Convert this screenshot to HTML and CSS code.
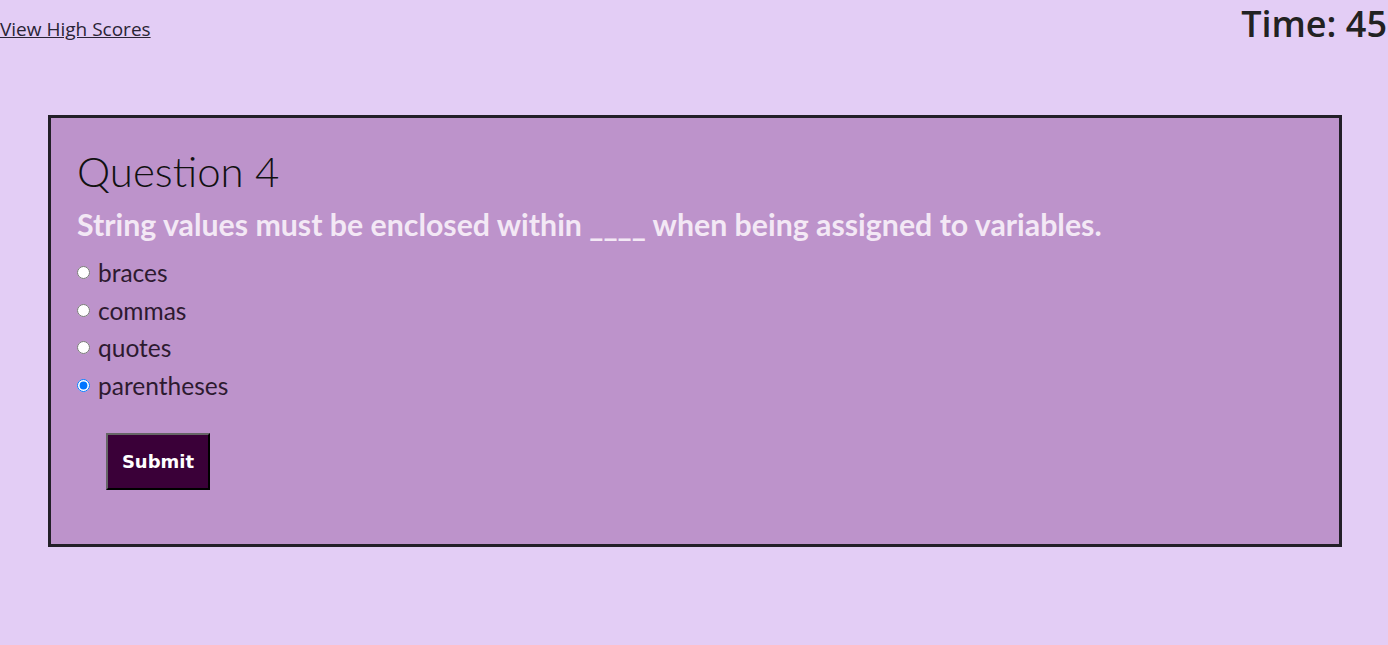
FILE: index.html
```html
<!DOCTYPE html>
<html lang="en">
<head>
<meta charset="utf-8">
<title>Quiz</title>
<link rel="stylesheet" href="styles.css">
</head>
<body>
<header class="topbar">
  <a class="scores-link" href="#">View High Scores</a>
  <div class="timer">Time: 45</div>
</header>
<main class="quiz-card">
  <h1 class="q-title">Question 4</h1>
  <p class="q-text">String values must be enclosed within ____ when being assigned to variables.</p>
  <form class="options">
    <label class="option"><input type="radio" name="a"> <span>braces</span></label>
    <label class="option"><input type="radio" name="a"> <span>commas</span></label>
    <label class="option"><input type="radio" name="a"> <span>quotes</span></label>
    <label class="option"><input type="radio" name="a" checked> <span>parentheses</span></label>
    <button type="button" class="submit-btn">Submit</button>
  </form>
</main>
</body>
</html>
```
FILE: styles.css
```css
html { overflow: hidden; }
body {
  margin: 0;
  background: #e3cdf5;
  font-family: "Open Sans", sans-serif;
  color: #222;
}
.topbar {
  display: flex;
  justify-content: space-between;
  align-items: flex-start;
  height: 115px;
}
.scores-link {
  margin-top: 16px;
  font-size: 19px;
  color: #2a2435;
  text-decoration: underline;
}
.timer {
  flex-shrink: 0;
  margin-right: 1px;
  font-size: 36px;
  font-weight: 600;
  color: #222;
  line-height: 48px;
}
.quiz-card {
  margin: 0 46px 0 48px;
  height: 426px;
  background: #bd93cb;
  border: 3px solid #231f28;
  padding: 0 26px;
  font-family: "Lato", sans-serif;
}
.q-title {
  margin: 28px 0 0;
  font-size: 42px;
  font-weight: 300;
  color: #111;
  line-height: 50px;
}
.q-text {
  margin: 10px 0 12px;
  font-size: 30.3px;
  font-weight: 700;
  color: #f3e8f5;
  line-height: 36px;
}
.options {
  display: flex;
  flex-direction: column;
  align-items: flex-start;
}
.option {
  display: flex;
  align-items: center;
  font-size: 24.5px;
  color: #2d1a30;
  height: 37.5px;
}
.option input {
  margin: 0 8px 0 0;
  width: 13px;
  height: 13px;
}
.submit-btn {
  margin: 29px 0 0 29px;
  width: 104px;
  height: 57px;
  background: #3a0038;
  color: #fff;
  font-family: "DejaVu Sans", sans-serif;
  font-weight: 700;
  font-size: 18px;
  border: 2px outset #555;
  border-color: #666 #111 #111 #666;
}
```
